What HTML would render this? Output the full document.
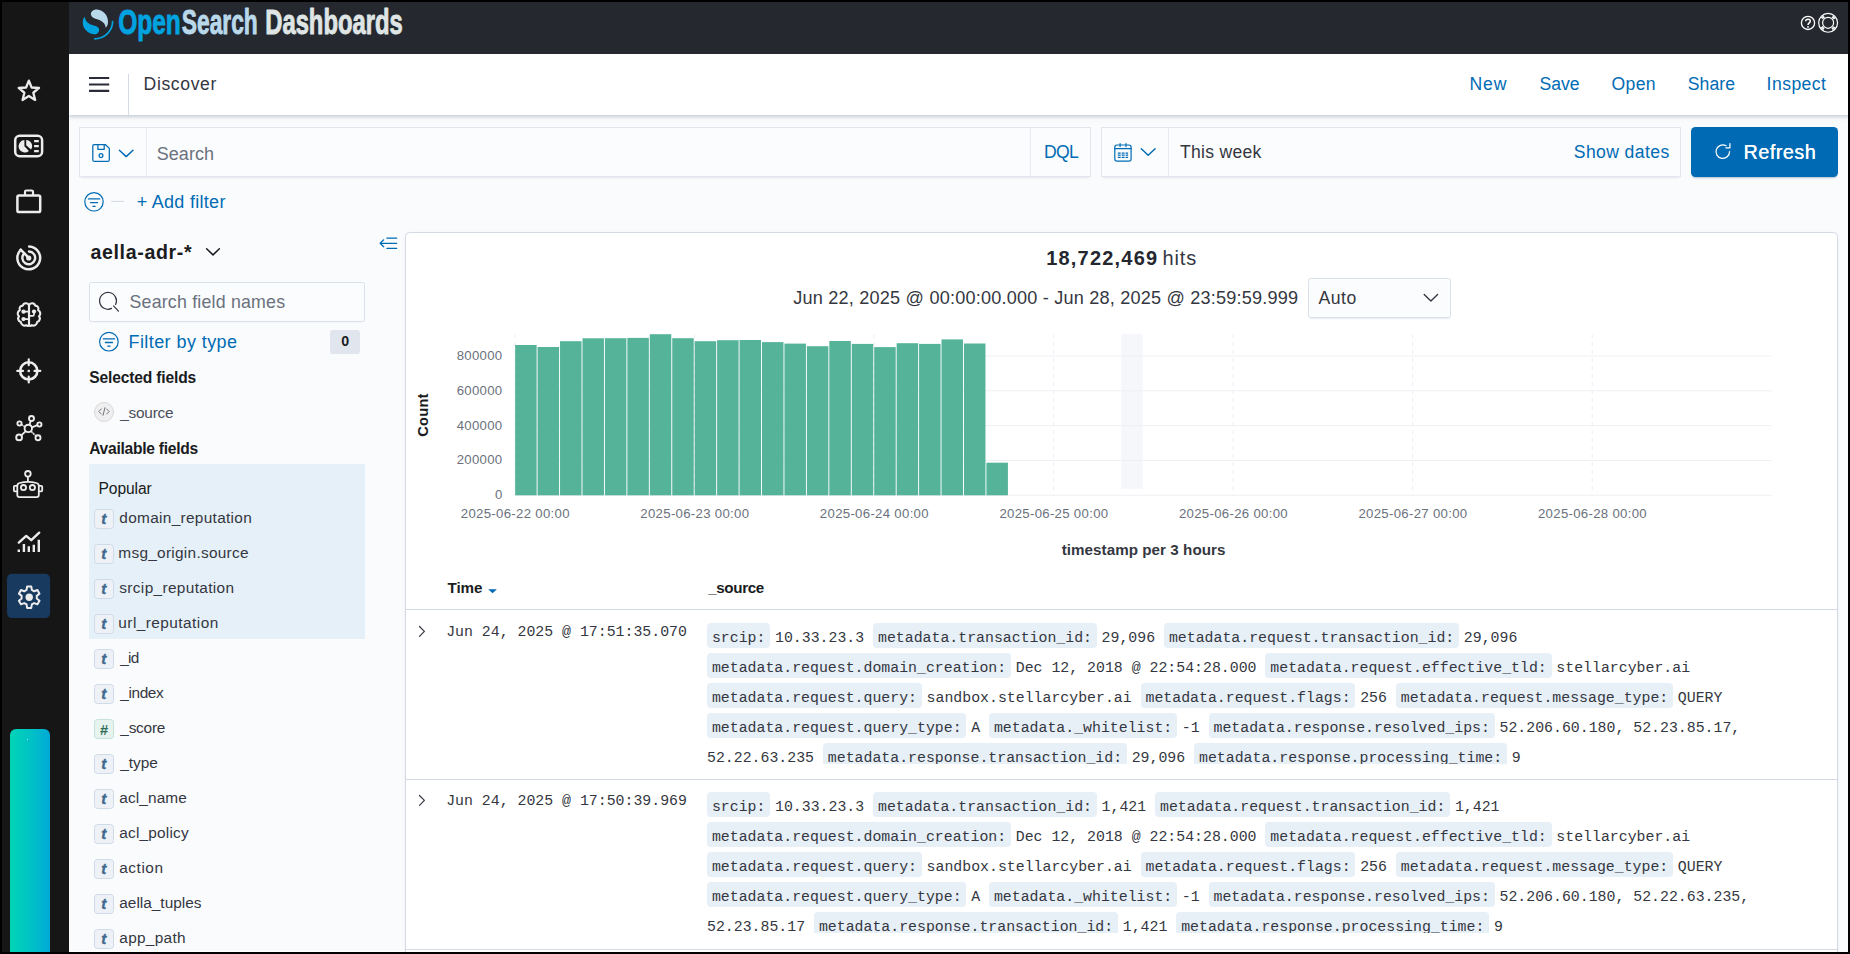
<!DOCTYPE html>
<html lang="en">
<head>
<meta charset="utf-8">
<title>Discover - OpenSearch Dashboards</title>
<style>

*{box-sizing:border-box;margin:0;padding:0}
html,body{width:1850px;height:954px;overflow:hidden;background:#000}
body{font-family:"Liberation Sans",sans-serif;color:#343741;position:relative}
#app{position:absolute;left:0;top:0;width:1850px;height:954px;background:#fafbfd;overflow:hidden}
.abs{position:absolute}
.t{position:absolute;white-space:nowrap;display:block}
svg{display:block;overflow:visible;position:absolute}
.frame{position:absolute;left:0;top:0;width:1850px;height:954px;box-shadow:inset 0 0 0 2px #000;pointer-events:none;z-index:50}
.side{z-index:5;position:absolute;left:0;top:0;width:69px;height:954px;background:#161616}
.hdr{z-index:4;position:absolute;left:69px;top:0;width:1781px;height:53.5px;background:#25282f}
.nav{position:absolute;left:69px;top:53.5px;width:1781px;height:61.5px;background:#fff;box-shadow:0 2px 3px 0 rgba(152,162,179,.35),0 1px 6px 0 rgba(152,162,179,.25)}
.lnk{color:#006bb4}
.box{position:absolute;background:#fbfcfd;border:1px solid #e1e5ee;box-shadow:0 1px 1px -1px rgba(152,162,179,.2),0 3px 2px -2px rgba(152,162,179,.2)}
.vline{position:absolute;width:1px;background:#d3dae6}
.hline{position:absolute;height:1px;background:#d3dae6}

.tok{position:absolute;left:94px;width:20px;height:20px;border-radius:3.5px;background:#eef2f7;border:1px solid #cfdbe9}
.tok.num{background:#e6f3ee;border-color:#c5e2d8}

.panel{position:absolute;left:405px;top:232px;width:1433px;height:740px;background:#fff;border:1px solid #d3dae6;border-radius:4.5px;box-shadow:0 2px 2px -1px rgba(152,162,179,.25),0 1px 5px -2px rgba(152,162,179,.25)}

.row{position:absolute;left:406px;width:1431px;height:170px;border-bottom:1px solid #d3dae6;font-family:"Liberation Mono",monospace;font-size:14.86px;color:#343741}
.ts{position:absolute;left:40.2px;top:11px;line-height:22px;white-space:nowrap}
.src{position:absolute;left:301px;top:12.8px;height:141.2px;overflow:hidden;width:1120px}
.ln{height:30px;line-height:30px;white-space:pre}
.src dt,.src dd{display:inline}
.src dt{background:#e7eff7;border-radius:4px;padding:6.8px 4.9px 1.8px;margin-right:4.7px}
.r2>*{margin-top:-1px}

</style>
</head>
<body>
<div id="app">
<nav class="side">
<svg width="69" height="954" viewBox="0 0 69 954" fill="none" stroke="#ececec" stroke-width="2.2" stroke-linecap="round" stroke-linejoin="round">
<polygon points="28.85,80.60 31.61,87.50 39.03,87.99 33.32,92.75 35.14,99.96 28.85,96.00 22.56,99.96 24.38,92.75 18.67,87.99 26.09,87.50" stroke-width="2.3" stroke-linejoin="round"/>
<rect x="15.2" y="135.7" width="26.9" height="20.5" rx="4.5" stroke-width="2.5"/>
<path d="M26.2 139.9A6.2 6.2 0 0 1 31 149.6L26.2 145.2Z M24.4 140.1V146.2L28.9 150.9A6.2 6.2 0 1 1 24.4 140.1Z" fill="#ececec" stroke="none"/>
<path d="M34.1 141.1H38.8M34.1 146.1H38.8M34.1 151.1H38.8" stroke-width="2.1" stroke-linecap="butt"/>
<rect x="17.4" y="195.5" width="22.8" height="16.5" rx="1.6" stroke-width="2.5"/>
<path d="M25 195V191.8Q25 190.5 26.3 190.5H31.7Q33 190.5 33 191.8V195" stroke-width="2.2"/>
<path d="M29.15 246.51A11.4 11.4 0 1 1 20.69 249.84" stroke-width="2.5"/>
<path d="M28.97 251.50A6.4 6.4 0 1 1 24.22 253.37" stroke-width="2.4"/>
<path d="M20.7 249.6L28.2 257.3" stroke-width="2.5"/>
<circle cx="28.75" cy="258" r="2.6" fill="#ececec" stroke="none"/>
<path d="M29 305.2C27.6 302.6 23.6 302.6 22.9 305.6C20.2 305.6 18.9 308 19.9 310.1C17.3 311.4 17 314.8 19 316.3C17.3 318.3 18.3 321.3 20.8 321.9C21 324.8 24 326.5 26.3 325.2C27.4 326.3 28.6 326 29 325Z" stroke-width="2.1"/>
<path d="M29 305.2C30.4 302.6 34.4 302.6 35.1 305.6C37.8 305.6 39.1 308 38.1 310.1C40.7 311.4 41 314.8 39 316.3C40.7 318.3 39.7 321.3 37.2 321.9C37 324.8 34 326.5 31.7 325.2C30.6 326.3 29.4 326 29 325Z" stroke-width="2.1"/>
<path d="M24.5 311.7H29M24.5 319.1H29M29 315.8H32.6Q34 315.8 34 314.4V312.5" stroke-width="1.7"/>
<circle cx="23.5" cy="311.7" r="2.15" fill="#ececec" stroke="none"/><circle cx="23.5" cy="319.1" r="2.15" fill="#ececec" stroke="none"/><circle cx="34" cy="311.6" r="2.15" fill="#ececec" stroke="none"/>
<circle cx="28.75" cy="370.9" r="8.6" stroke-width="2.6"/>
<path d="M17.3 370.9H23M34.5 370.9H40.3M28.75 359.4V365.2M28.75 376.6V382.4" stroke-width="2.2"/>
<rect x="27.6" y="369.8" width="2.3" height="2.3" fill="#ececec" stroke="none"/>
<g stroke-width="1.9"><circle cx="28.3" cy="428.4" r="3.7"/><circle cx="31.5" cy="418.5" r="2.5"/><circle cx="39.4" cy="424.5" r="2.1"/><circle cx="38" cy="437.8" r="2.5"/><circle cx="19.1" cy="437.4" r="2.9"/><circle cx="19.5" cy="423.5" r="2.1"/>
<path d="M29.5 424.8L30.7 421M31.9 427.4L37.4 425.2M25.5 431.3L21.3 435.4" stroke-width="1.8"/>
<path d="M24.8 426.6L21.5 424.6M31.2 431.4L36 436" stroke-width="1.5" stroke-dasharray="1.1 1.7"/></g>
<g stroke-width="1.8"><path d="M17.3 485.8Q17.3 483.6 19.6 483Q27.9 480.6 36.4 483Q38.8 483.6 38.8 485.8V495Q38.8 497.1 36.6 497.1H19.5Q17.3 497.1 17.3 495Z"/>
<path d="M17 485.9H14.8Q13.9 485.9 13.9 486.8V490.5Q13.9 491.4 14.8 491.4H17M39.1 485.9H41.3Q42.2 485.9 42.2 486.8V490.5Q42.2 491.4 41.3 491.4H39.1"/>
<circle cx="27.9" cy="473.8" r="2.8"/><path d="M27.9 476.8V481.2"/><circle cx="23.5" cy="487.6" r="2.6"/><circle cx="32.4" cy="487.6" r="2.6"/></g>
<path d="M18.8 549.4V552M23.9 544V552M28.8 546.3V552M33.8 544.7V552M38.8 539.7V552" stroke-width="2.4" stroke-linecap="butt"/>
<path d="M18.8 542.6L26.2 535.9L31.3 540.2L39.2 532.7" stroke-width="2.4"/>
<rect x="7" y="573.8" width="43.1" height="44.3" rx="5" fill="#193a5f" stroke="none"/>
<path d="M26.57 589.96 L27.12 586.50 L31.28 586.50 L31.83 589.96 L34.15 591.30 L37.43 590.05 L39.51 593.65 L36.78 595.86 L36.78 598.54 L39.51 600.75 L37.43 604.35 L34.15 603.10 L31.83 604.44 L31.28 607.90 L27.12 607.90 L26.57 604.44 L24.25 603.10 L20.97 604.35 L18.89 600.75 L21.62 598.54 L21.62 595.86 L18.89 593.65 L20.97 590.05 L24.25 591.30Z" stroke-width="2" stroke-linejoin="round"/>
<circle cx="29.2" cy="597.2" r="3.7" fill="#ececec" stroke="none"/>
</svg>
<div class="abs" style="left:10px;top:728.6px;width:40px;height:230px;border-radius:6px 6px 0 0;background:linear-gradient(90deg,#00d4b6 0%,#00c3c4 50%,#00a9d7 100%)"></div>
<div class="abs" style="left:27px;top:738.6px;width:1.2px;height:1.2px;background:#dff;border-radius:50%"></div>
</nav>
<header class="hdr"></header>
<svg style="left:0;top:0;z-index:6" width="1850" height="54" viewBox="0 0 1850 54">
<path d="M90.9 14.6C90.6 11.6 93.6 9.3 97.2 9.6C103.2 10.1 108.3 15.6 108 22.2C107.9 24.6 107 26.6 105.7 27.8C105.6 24.6 104 22.4 100.8 20.7C97.6 19 91.4 18.6 90.9 14.6Z" fill="#b9d9eb"/>
<path d="M84.5 16.7C82.2 19.6 82 25.2 85.3 29.6C88.6 34 94.2 35.3 97.3 33.4C99.6 32 99.8 28.8 97.6 27.1C95.2 25.2 91.2 25.3 88.2 22.9C86.2 21.3 85.1 19.2 84.5 16.7Z" fill="#00a3e0"/>
<path d="M112.6 20.9C113.1 30.8 104.4 38.9 94.2 38.8" fill="none" stroke="#00a3e0" stroke-width="1.7"/>
<g font-family="Liberation Sans, sans-serif" font-weight="700" font-size="34.4" stroke-width="0.9" stroke-linejoin="round">
<text x="118.2" y="33.7" fill="#00a3e0" stroke="#00a3e0" textLength="62.6" lengthAdjust="spacingAndGlyphs">Open</text>
<text x="181.8" y="33.7" fill="#b9d9eb" stroke="#b9d9eb" textLength="76" lengthAdjust="spacingAndGlyphs">Search</text>
<text x="265.2" y="33.7" fill="#dfe5e4" stroke="#dfe5e4" textLength="137.6" lengthAdjust="spacingAndGlyphs">Dashboards</text>
</g>
<g fill="none" stroke="#fff">
<circle cx="1808" cy="22.9" r="6.6" stroke-width="1.3"/>
<path d="M1805.7 21.3C1805.7 18.5 1810.3 18.5 1810.3 21.1C1810.3 22.8 1808 22.9 1808 24.9" stroke-width="1.5"/>
<circle cx="1808" cy="26.9" r="0.9" fill="#fff" stroke="none"/>
<circle cx="1828.1" cy="22.8" r="9.45" stroke-width="1.2"/><circle cx="1828.1" cy="22.8" r="5.5" stroke-width="1.2"/>
<circle cx="1828.1" cy="22.8" r="7.6" stroke-width="2.6" stroke-dasharray="3.3 8.638" stroke-dashoffset="-4.319" opacity=".92"/>
</g>
</svg>
<div class="nav"></div>
<svg style="left:88.9px;top:76.7px" width="20.2" height="15" viewBox="0 0 20.2 15"><path d="M0 1H20.2M0 7.5H20.2M0 13.9H20.2" stroke="#2a2c39" stroke-width="2.1"/></svg>
<div class="vline" style="left:128px;top:74px;height:41px"></div>
<h1 class="t" style="left:143.60px;top:72px;font-size:17.6px;line-height:24px;letter-spacing:0.618px;font-weight:400;">Discover</h1>
<a class="t" style="left:1469.40px;top:72px;font-size:17.6px;line-height:24px;color:#006bb4;letter-spacing:0.905px;">New</a>
<a class="t" style="left:1539.60px;top:72px;font-size:17.6px;line-height:24px;color:#006bb4;letter-spacing:-0.072px;">Save</a>
<a class="t" style="left:1611.60px;top:72px;font-size:17.6px;line-height:24px;color:#006bb4;letter-spacing:0.282px;">Open</a>
<a class="t" style="left:1687.70px;top:72px;font-size:17.6px;line-height:24px;color:#006bb4;letter-spacing:0.084px;">Share</a>
<a class="t" style="left:1766.60px;top:72px;font-size:17.6px;line-height:24px;color:#006bb4;letter-spacing:0.444px;">Inspect</a>
<div class="box" style="left:79px;top:127px;width:1011.5px;height:49.6px"></div>
<div class="vline" style="left:146px;top:128px;height:47.6px;background:#e8ecf2"></div>
<div class="vline" style="left:1030px;top:128px;height:47.6px;background:#e8ecf2"></div>
<svg style="left:91px;top:143px" width="44" height="20" viewBox="91 143 44 20" fill="none" stroke="#006bb4" stroke-width="1.25" stroke-linejoin="round" stroke-linecap="round">
<path d="M94 144.7H105.6L109.3 148.4V160.1Q109.3 161.3 108.1 161.3H94Q92.8 161.3 92.8 160.1V145.9Q92.8 144.7 94 144.7Z"/><path d="M97.9 144.9V149.4H104.2V144.9"/><circle cx="101" cy="155.6" r="1.9"/>
<path d="M119.4 150.2L126.2 156.6L133 150.2" stroke-width="1.45"/></svg>
<span class="t" style="left:156.70px;top:142px;font-size:18px;line-height:24px;color:#6a717d;letter-spacing:0.056px;">Search</span>
<span class="t" style="left:1043.90px;top:140px;font-size:17.6px;line-height:24px;color:#006bb4;letter-spacing:-0.645px;">DQL</span>
<div class="box" style="left:1101px;top:127px;width:580px;height:49.6px"></div>
<div class="vline" style="left:1168px;top:128px;height:47.6px;background:#e8ecf2"></div>
<svg style="left:1112px;top:141px" width="48" height="24" viewBox="1112 141 48 24" fill="none" stroke="#006bb4" stroke-width="1.2" stroke-linejoin="round" stroke-linecap="round">
<rect x="1114.8" y="145" width="16.3" height="16.2" rx="2.2"/><path d="M1114.8 148.7H1131.1M1120.1 143.5V146.6M1126 143.5V146.6" />
<path d="M1117.8 153.1H1120.7M1121.7 153.1H1124.6M1125.6 153.1H1128.1M1117.8 155.2H1120.7M1121.7 155.2H1124.6M1125.6 155.2H1128.1M1117.8 157.3H1120.7M1121.7 157.3H1124.6M1125.6 157.3H1128.1" stroke-width="1.2" stroke-linecap="butt"/>
<path d="M1141.3 148.8L1148.2 155.3L1155.1 148.8" stroke-width="1.45"/></svg>
<span class="t" style="left:1180.00px;top:140px;font-size:17.6px;line-height:24px;letter-spacing:0.275px;">This week</span>
<span class="t" style="left:1573.80px;top:140px;font-size:17.6px;line-height:24px;color:#006bb4;letter-spacing:0.384px;">Show dates</span>
<div class="abs" style="left:1691px;top:127px;width:147px;height:49.6px;background:#006bb4;border-radius:4.5px;box-shadow:0 2px 2px -1px rgba(0,60,110,.3)"></div>
<svg style="left:1712px;top:142px" width="20" height="20" viewBox="1712 142 20 20" fill="none" stroke="#fff" stroke-width="1.25" stroke-linecap="round" stroke-linejoin="round"><path d="M1729.6 151.6A6.8 6.8 0 1 1 1726.1 145.7"/><path d="M1729.9 143.7V147.8H1725.8"/></svg>
<span class="t" style="left:1743.50px;top:139px;font-size:19.6px;line-height:26px;color:#fff;letter-spacing:0.582px;text-shadow:0.2px 0 0 #fff;">Refresh</span>
<svg style="left:82px;top:190px" width="40" height="24" viewBox="82 190 40 24" fill="none" stroke="#006bb4" stroke-width="1.2" stroke-linecap="round"><circle cx="94" cy="201.8" r="9.2"/><path d="M88.4 198.9H99.7M90.5 202.6H97.6M92.9 206.3H95.2" stroke-width="1.3"/><path d="M111.6 201.4H123.8" stroke="#d3dae6" stroke-width="1"/></svg>
<span class="t" style="left:136.70px;top:190px;font-size:18px;line-height:24px;color:#006bb4;letter-spacing:0.286px;">+ Add filter</span>
<aside class="fields">
<h2 class="t" style="left:90.40px;top:239px;font-size:19.6px;line-height:26px;font-weight:700;color:#1a1c21;letter-spacing:0.648px;">aella-adr-*</h2>
<svg style="left:204px;top:246px" width="18" height="12" viewBox="204 246 18 12" fill="none" stroke="#1a1c21" stroke-width="1.5" stroke-linecap="round" stroke-linejoin="round"><path d="M206.6 248.8L213 254.9L219.4 248.8"/></svg>
<svg style="left:378px;top:236px" width="20" height="14" viewBox="378 236 20 14" fill="none" stroke="#006bb4" stroke-width="1.2" stroke-linecap="round" stroke-linejoin="round"><path d="M386.9 238.2H396.7M380.1 243.3H396.7M386.9 248.4H396.7M383.7 239.8L380.1 243.3L383.7 246.8"/></svg>
<div class="box" style="left:89px;top:282.4px;width:276px;height:39.2px;background:#fbfcfd;border-color:#dbe1ea;border-radius:2.5px;box-shadow:0 1px 1px -1px rgba(152,162,179,.15),0 2px 2px -2px rgba(152,162,179,.15)"></div>
<svg style="left:98px;top:291px" width="22" height="22" viewBox="98 291 22 22" fill="none" stroke="#343741" stroke-width="1.25" stroke-linecap="round"><path d="M111.6 308.4A8.4 8.4 0 1 1 115.6 304.4"/><path d="M113.6 305.9L118.4 311.2"/></svg>
<span class="t" style="left:129.50px;top:290px;font-size:17.8px;line-height:24px;color:#6a717d;letter-spacing:0.199px;">Search field names</span>
<svg style="left:97px;top:330px" width="24" height="24" viewBox="97 330 24 24" fill="none" stroke="#006bb4" stroke-width="1.2" stroke-linecap="round"><circle cx="108.9" cy="341.7" r="9.3"/><path d="M103.3 338.8H114.6M105.4 342.5H112.5M107.8 346.2H110.1" stroke-width="1.3"/></svg>
<span class="t" style="left:128.50px;top:330px;font-size:18px;line-height:24px;color:#006bb4;letter-spacing:0.421px;">Filter by type</span>
<div class="abs" style="left:330.2px;top:329.5px;width:29.4px;height:24px;background:#e0e5ee;border-radius:3px"></div>
<span class="t" style="left:341.20px;top:331px;font-size:14.2px;line-height:20px;font-weight:700;color:#1a1c21;">0</span>
<h3 class="t" style="left:89.20px;top:367px;font-size:15.6px;line-height:21px;font-weight:700;color:#1a1c21;letter-spacing:-0.152px;">Selected fields</h3>
<div class="abs" style="left:94px;top:401.7px;width:20px;height:20px;border-radius:50%;background:#efefef;border:1px solid #d9d9d9"></div>
<svg style="left:97px;top:406.2px" width="14" height="11" viewBox="97 407 14 11" fill="none" stroke="#6f737b" stroke-width="1" stroke-linecap="round" stroke-linejoin="round"><path d="M101.4 409.9L98.8 412.5L101.4 415.1M106.6 409.9L109.2 412.5L106.6 415.1M104.9 408.7L103.1 416.3"/></svg>
<span class="t" style="left:120.20px;top:402px;font-size:15.4px;line-height:21px;color:#4a4e59;letter-spacing:-0.232px;">_source</span>
<h3 class="t" style="left:89.20px;top:438px;font-size:15.6px;line-height:21px;font-weight:700;color:#1a1c21;letter-spacing:-0.266px;">Available fields</h3>
<div class="abs" style="left:89px;top:464px;width:276px;height:174.5px;background:#e6f0f8"></div>
<span class="t" style="left:98.50px;top:478px;font-size:15.6px;line-height:21px;color:#1a1c21;letter-spacing:-0.076px;">Popular</span>
<div class="tok" style="top:509.0px"></div>
<span class="t" style="left:101.30px;top:508px;font-size:15.2px;line-height:21px;font-weight:700;font-style:italic;color:#41698f;-webkit-text-stroke:0.35px #41698f;">t</span>
<span class="t" style="left:119.30px;top:507px;font-size:15.4px;line-height:21px;letter-spacing:0.311px;">domain_reputation</span>
<div class="tok" style="top:544.0px"></div>
<span class="t" style="left:101.30px;top:543px;font-size:15.2px;line-height:21px;font-weight:700;font-style:italic;color:#41698f;-webkit-text-stroke:0.35px #41698f;">t</span>
<span class="t" style="left:118.30px;top:542px;font-size:15.4px;line-height:21px;letter-spacing:0.282px;">msg_origin.source</span>
<div class="tok" style="top:579.0px"></div>
<span class="t" style="left:101.30px;top:578px;font-size:15.2px;line-height:21px;font-weight:700;font-style:italic;color:#41698f;-webkit-text-stroke:0.35px #41698f;">t</span>
<span class="t" style="left:119.30px;top:577px;font-size:15.4px;line-height:21px;letter-spacing:0.350px;">srcip_reputation</span>
<div class="tok" style="top:614.1px"></div>
<span class="t" style="left:101.30px;top:613px;font-size:15.2px;line-height:21px;font-weight:700;font-style:italic;color:#41698f;-webkit-text-stroke:0.35px #41698f;">t</span>
<span class="t" style="left:118.30px;top:612px;font-size:15.4px;line-height:21px;letter-spacing:0.449px;">url_reputation</span>
<div class="tok" style="top:649.1px"></div>
<span class="t" style="left:101.30px;top:648px;font-size:15.2px;line-height:21px;font-weight:700;font-style:italic;color:#41698f;-webkit-text-stroke:0.35px #41698f;">t</span>
<span class="t" style="left:120.30px;top:647px;font-size:15.4px;line-height:21px;letter-spacing:-0.789px;">_id</span>
<div class="tok" style="top:684.1px"></div>
<span class="t" style="left:101.30px;top:683px;font-size:15.2px;line-height:21px;font-weight:700;font-style:italic;color:#41698f;-webkit-text-stroke:0.35px #41698f;">t</span>
<span class="t" style="left:120.30px;top:682px;font-size:15.4px;line-height:21px;letter-spacing:-0.391px;">_index</span>
<div class="tok num" style="top:719.1px"></div>
<span class="t" style="left:99.90px;top:720px;font-size:14.6px;line-height:20px;font-weight:700;color:#2f6b59;">#</span>
<span class="t" style="left:120.30px;top:717px;font-size:15.4px;line-height:21px;letter-spacing:-0.227px;">_score</span>
<div class="tok" style="top:754.1px"></div>
<span class="t" style="left:101.30px;top:753px;font-size:15.2px;line-height:21px;font-weight:700;font-style:italic;color:#41698f;-webkit-text-stroke:0.35px #41698f;">t</span>
<span class="t" style="left:120.30px;top:752px;font-size:15.4px;line-height:21px;letter-spacing:-0.023px;">_type</span>
<div class="tok" style="top:789.2px"></div>
<span class="t" style="left:101.30px;top:788px;font-size:15.2px;line-height:21px;font-weight:700;font-style:italic;color:#41698f;-webkit-text-stroke:0.35px #41698f;">t</span>
<span class="t" style="left:119.30px;top:787px;font-size:15.4px;line-height:21px;letter-spacing:0.118px;">acl_name</span>
<div class="tok" style="top:824.2px"></div>
<span class="t" style="left:101.30px;top:823px;font-size:15.2px;line-height:21px;font-weight:700;font-style:italic;color:#41698f;-webkit-text-stroke:0.35px #41698f;">t</span>
<span class="t" style="left:119.30px;top:822px;font-size:15.4px;line-height:21px;letter-spacing:0.201px;">acl_policy</span>
<div class="tok" style="top:859.2px"></div>
<span class="t" style="left:101.30px;top:858px;font-size:15.2px;line-height:21px;font-weight:700;font-style:italic;color:#41698f;-webkit-text-stroke:0.35px #41698f;">t</span>
<span class="t" style="left:119.30px;top:857px;font-size:15.4px;line-height:21px;letter-spacing:0.518px;">action</span>
<div class="tok" style="top:894.2px"></div>
<span class="t" style="left:101.30px;top:893px;font-size:15.2px;line-height:21px;font-weight:700;font-style:italic;color:#41698f;-webkit-text-stroke:0.35px #41698f;">t</span>
<span class="t" style="left:119.30px;top:892px;font-size:15.4px;line-height:21px;">aella_tuples</span>
<div class="tok" style="top:929.2px"></div>
<span class="t" style="left:101.30px;top:928px;font-size:15.2px;line-height:21px;font-weight:700;font-style:italic;color:#41698f;-webkit-text-stroke:0.35px #41698f;">t</span>
<span class="t" style="left:119.30px;top:927px;font-size:15.4px;line-height:21px;letter-spacing:0.295px;">app_path</span>
<div class="abs" style="left:69px;top:951px;width:336px;height:1px;background:#fff"></div>
</aside>
<main class="panel"></main>
<strong class="t" style="left:1046.20px;top:245px;font-size:20px;line-height:26px;font-weight:700;color:#25272f;letter-spacing:1.203px;">18,722,469</strong>
<span class="t" style="left:1162.50px;top:245px;font-size:20px;line-height:26px;letter-spacing:0.892px;">hits</span>
<span class="t" style="left:793.30px;top:286px;font-size:18.1px;line-height:24px;letter-spacing:0.202px;">Jun 22, 2025 @ 00:00:00.000 - Jun 28, 2025 @ 23:59:59.999</span>
<div class="box" style="left:1308.2px;top:278.2px;width:142.5px;height:39.4px;background:#fbfcfd;border-color:#dbe1ea;border-radius:2.5px"></div>
<span class="t" style="left:1318.60px;top:286px;font-size:17.6px;line-height:24px;letter-spacing:0.497px;">Auto</span>
<svg style="left:1420px;top:291px" width="22" height="14" viewBox="1420 291 22 14" fill="none" stroke="#343741" stroke-width="1.4" stroke-linecap="round" stroke-linejoin="round"><path d="M1424.2 294.6L1430.9 300.9L1437.6 294.6"/></svg>
<svg style="left:0;top:0" width="1850" height="560" viewBox="0 0 1850 560">
<rect x="1121.3" y="334" width="21.4" height="155" fill="#f5f7fb"/>
<path d="M515 495.30H1771.5" stroke="#eef0f4" stroke-width="1"/>
<path d="M515 460.47H1771.5" stroke="#eef0f4" stroke-width="1"/>
<path d="M515 425.64H1771.5" stroke="#eef0f4" stroke-width="1"/>
<path d="M515 390.81H1771.5" stroke="#eef0f4" stroke-width="1"/>
<path d="M515 355.98H1771.5" stroke="#eef0f4" stroke-width="1"/>
<path d="M515.00 334.3V495.3" stroke="#eceef3" stroke-width="1" stroke-dasharray="4 4"/>
<path d="M694.53 334.3V495.3" stroke="#eceef3" stroke-width="1" stroke-dasharray="4 4"/>
<path d="M874.06 334.3V495.3" stroke="#eceef3" stroke-width="1" stroke-dasharray="4 4"/>
<path d="M1053.59 334.3V495.3" stroke="#eceef3" stroke-width="1" stroke-dasharray="4 4"/>
<path d="M1233.12 334.3V495.3" stroke="#eceef3" stroke-width="1" stroke-dasharray="4 4"/>
<path d="M1412.65 334.3V495.3" stroke="#eceef3" stroke-width="1" stroke-dasharray="4 4"/>
<path d="M1592.18 334.3V495.3" stroke="#eceef3" stroke-width="1" stroke-dasharray="4 4"/>
<rect x="515.15" y="345.00" width="21.49" height="150.30" fill="#54b399"/>
<rect x="537.59" y="347.00" width="21.49" height="148.30" fill="#54b399"/>
<rect x="560.03" y="341.20" width="21.49" height="154.10" fill="#54b399"/>
<rect x="582.47" y="338.30" width="21.49" height="157.00" fill="#54b399"/>
<rect x="604.91" y="338.20" width="21.49" height="157.10" fill="#54b399"/>
<rect x="627.36" y="337.90" width="21.49" height="157.40" fill="#54b399"/>
<rect x="649.80" y="334.20" width="21.49" height="161.10" fill="#54b399"/>
<rect x="672.24" y="338.20" width="21.49" height="157.10" fill="#54b399"/>
<rect x="694.68" y="341.20" width="21.49" height="154.10" fill="#54b399"/>
<rect x="717.12" y="340.20" width="21.49" height="155.10" fill="#54b399"/>
<rect x="739.56" y="340.00" width="21.49" height="155.30" fill="#54b399"/>
<rect x="762.00" y="342.10" width="21.49" height="153.20" fill="#54b399"/>
<rect x="784.45" y="343.60" width="21.49" height="151.70" fill="#54b399"/>
<rect x="806.89" y="346.20" width="21.49" height="149.10" fill="#54b399"/>
<rect x="829.33" y="341.00" width="21.49" height="154.30" fill="#54b399"/>
<rect x="851.77" y="343.90" width="21.49" height="151.40" fill="#54b399"/>
<rect x="874.21" y="347.10" width="21.49" height="148.20" fill="#54b399"/>
<rect x="896.65" y="343.20" width="21.49" height="152.10" fill="#54b399"/>
<rect x="919.09" y="343.90" width="21.49" height="151.40" fill="#54b399"/>
<rect x="941.53" y="339.40" width="21.49" height="155.90" fill="#54b399"/>
<rect x="963.98" y="343.50" width="21.49" height="151.80" fill="#54b399"/>
<rect x="986.42" y="462.70" width="21.49" height="32.60" fill="#54b399"/>
</svg>
<span class="t" style="left:456.70px;top:346px;font-size:13.2px;line-height:19px;color:#6a717d;letter-spacing:0.286px;">800000</span>
<span class="t" style="left:456.70px;top:381px;font-size:13.2px;line-height:19px;color:#6a717d;letter-spacing:0.286px;">600000</span>
<span class="t" style="left:456.70px;top:416px;font-size:13.2px;line-height:19px;color:#6a717d;letter-spacing:0.286px;">400000</span>
<span class="t" style="left:456.70px;top:450px;font-size:13.2px;line-height:19px;color:#6a717d;letter-spacing:0.286px;">200000</span>
<span class="t" style="left:495.00px;top:485px;font-size:13.2px;line-height:19px;color:#6a717d;">0</span>
<span class="t" style="left:0.00px;top:-15px;font-size:14.6px;line-height:20px;font-weight:700;color:#1a1c21;left:423.3px;top:414.6px;transform:translate(-50%,-50%) rotate(-90deg);letter-spacing:0.25px;">Count</span>
<span class="t" style="left:460.80px;top:504px;font-size:13.2px;line-height:19px;color:#6a717d;letter-spacing:0.307px;">2025-06-22 00:00</span>
<span class="t" style="left:640.33px;top:504px;font-size:13.2px;line-height:19px;color:#6a717d;letter-spacing:0.307px;">2025-06-23 00:00</span>
<span class="t" style="left:819.86px;top:504px;font-size:13.2px;line-height:19px;color:#6a717d;letter-spacing:0.307px;">2025-06-24 00:00</span>
<span class="t" style="left:999.39px;top:504px;font-size:13.2px;line-height:19px;color:#6a717d;letter-spacing:0.307px;">2025-06-25 00:00</span>
<span class="t" style="left:1178.92px;top:504px;font-size:13.2px;line-height:19px;color:#6a717d;letter-spacing:0.307px;">2025-06-26 00:00</span>
<span class="t" style="left:1358.45px;top:504px;font-size:13.2px;line-height:19px;color:#6a717d;letter-spacing:0.307px;">2025-06-27 00:00</span>
<span class="t" style="left:1537.98px;top:504px;font-size:13.2px;line-height:19px;color:#6a717d;letter-spacing:0.307px;">2025-06-28 00:00</span>
<span class="t" style="left:1061.70px;top:539px;font-size:15.2px;line-height:21px;font-weight:700;letter-spacing:0.043px;">timestamp per 3 hours</span>
<section class="doctable">
<span class="t" style="left:447.40px;top:577px;font-size:15.2px;line-height:21px;font-weight:700;color:#1a1c21;letter-spacing:-0.009px;">Time</span>
<svg style="left:487px;top:588px" width="11" height="7" viewBox="487 588 11 7"><path d="M488.2 589.2H496.9L492.55 593.3Z" fill="#006bb4"/></svg>
<span class="t" style="left:708.20px;top:577px;font-size:15.2px;line-height:21px;font-weight:700;color:#1a1c21;letter-spacing:-0.367px;">_source</span>
<div class="hline" style="left:406px;top:609px;width:1431px"></div>
<div class="row" style="top:610.0px">
<svg style="left:12px;top:15px" width="9" height="13" viewBox="0 0 9 13" fill="none" stroke="#343741" stroke-width="1.2" stroke-linecap="round" stroke-linejoin="round"><path d="M1.5 1.5L6.4 6.4L1.5 11.3"/></svg>
<time class="ts">Jun 24, 2025 @ 17:51:35.070</time>
<dl class="src">
<div class="ln"><dt>srcip:</dt><dd>10.33.23.3</dd> <dt>metadata.transaction_id:</dt><dd>29,096</dd> <dt>metadata.request.transaction_id:</dt><dd>29,096</dd> </div>
<div class="ln"><dt>metadata.request.domain_creation:</dt><dd>Dec 12, 2018 @ 22:54:28.000</dd> <dt>metadata.request.effective_tld:</dt><dd>stellarcyber.ai</dd> </div>
<div class="ln"><dt>metadata.request.query:</dt><dd>sandbox.stellarcyber.ai</dd> <dt>metadata.request.flags:</dt><dd>256</dd> <dt>metadata.request.message_type:</dt><dd>QUERY</dd> </div>
<div class="ln"><dt>metadata.request.query_type:</dt><dd>A</dd> <dt>metadata._whitelist:</dt><dd>-1</dd> <dt>metadata.response.resolved_ips:</dt><dd>52.206.60.180, 52.23.85.17,</dd> </div>
<div class="ln"><dd>52.22.63.235</dd> <dt>metadata.response.transaction_id:</dt><dd>29,096</dd> <dt>metadata.response.processing_time:</dt><dd>9</dd> </div>
</dl></div>
<div class="row r2" style="top:780.0px">
<svg style="left:12px;top:15px" width="9" height="13" viewBox="0 0 9 13" fill="none" stroke="#343741" stroke-width="1.2" stroke-linecap="round" stroke-linejoin="round"><path d="M1.5 1.5L6.4 6.4L1.5 11.3"/></svg>
<time class="ts">Jun 24, 2025 @ 17:50:39.969</time>
<dl class="src">
<div class="ln"><dt>srcip:</dt><dd>10.33.23.3</dd> <dt>metadata.transaction_id:</dt><dd>1,421</dd> <dt>metadata.request.transaction_id:</dt><dd>1,421</dd> </div>
<div class="ln"><dt>metadata.request.domain_creation:</dt><dd>Dec 12, 2018 @ 22:54:28.000</dd> <dt>metadata.request.effective_tld:</dt><dd>stellarcyber.ai</dd> </div>
<div class="ln"><dt>metadata.request.query:</dt><dd>sandbox.stellarcyber.ai</dd> <dt>metadata.request.flags:</dt><dd>256</dd> <dt>metadata.request.message_type:</dt><dd>QUERY</dd> </div>
<div class="ln"><dt>metadata.request.query_type:</dt><dd>A</dd> <dt>metadata._whitelist:</dt><dd>-1</dd> <dt>metadata.response.resolved_ips:</dt><dd>52.206.60.180, 52.22.63.235,</dd> </div>
<div class="ln"><dd>52.23.85.17</dd> <dt>metadata.response.transaction_id:</dt><dd>1,421</dd> <dt>metadata.response.processing_time:</dt><dd>9</dd> </div>
</dl></div>
</section>
<div class="frame"></div>
</div>
</body>
</html>
